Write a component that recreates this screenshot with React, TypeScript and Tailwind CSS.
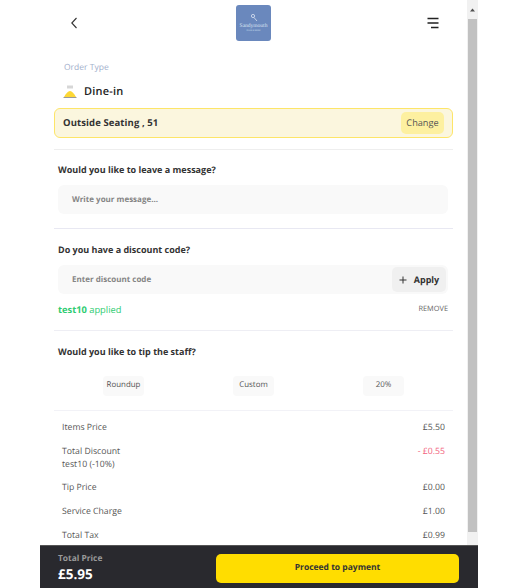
export default function App() {
  const rowText = "text-[8.7px] leading-[14px] text-[#555555]";
  const title = "text-[9px] leading-[14px] font-bold text-[#333333]";
  const chip = "w-[41px] h-[20px] rounded-[4px] bg-[#f9f9f9] flex items-center justify-center text-[7.9px] text-[#555555]";
  return (
    <div className="w-[508px] h-[588px] overflow-hidden bg-white pl-[40px] font-['Open_Sans',sans-serif] [text-rendering:geometricPrecision]">
      <div className="w-[438px] h-[588px] flex flex-col">
        <div className="flex flex-1 min-h-0">
          <div className="w-[427px] overflow-hidden">
            <header className="h-[46px] flex items-center justify-between pl-[28px] pr-[28px]">
              <svg width="12" height="12" viewBox="0 0 12 12" fill="none" stroke="#333" strokeWidth="1.1">
                <path d="M8.5 1 L3.8 6 L8.5 11" />
              </svg>
              <div className="w-[35px] h-[36px] rounded-[3px] bg-[#6a88bd] flex flex-col items-center justify-center">
                <svg width="10" height="10" viewBox="0 0 10 10" fill="none" stroke="#dbe3f2" strokeWidth="0.8">
                  <circle cx="4" cy="3" r="1.6" />
                  <path d="M5 4.5 L8 8" />
                </svg>
                <span className="text-[5.5px] leading-[6px] text-[#dbe3f2] font-['Liberation_Serif',serif] whitespace-nowrap">Sandymouth</span>
                <span className="text-[2px] leading-[4px] text-[#dbe3f2]">FOOD &amp; DRINK</span>
              </div>
              <svg width="12" height="12" viewBox="0 0 12 12" stroke="#222" strokeWidth="1.4">
                <path d="M0.5 1.5 H11.5 M0.5 6 H11.5 M4 10.5 H11.5" />
              </svg>
            </header>

            <div className="pl-[14px] w-[413px]">
              <div className="pl-[10px] pt-[15px] text-[8.5px] leading-[14px] text-[#a3b0cc]">Order Type</div>
              <div className="pl-[9px] pt-[8px] h-[33px] flex items-start gap-[7px]">
                <svg width="14" height="14" viewBox="0 0 14 14" className="mt-[2px]">
                  <path d="M1 12 C3 8.5 5 6 7 6 C9 6 11 8.5 13 12 Z" fill="#fdd835" />
                  <path d="M0.5 12.5 H13.5" stroke="#9a9a9a" strokeWidth="1" />
                  <path d="M5 0.5 V3.5 M7 0.5 V3.5 M9 0.5 V3.5" stroke="#9a9a9a" strokeWidth="0.8" />
                </svg>
                <span className="text-[11px] leading-[18px] font-semibold text-[#222222] tracking-[0.2px]">Dine-in</span>
              </div>
              <div className="h-[30px] w-[399px] flex items-center justify-between rounded-[6px] border border-[#fde568] bg-[#fbf6de] pl-[8px] pr-[8px]">
                <span className="text-[9.5px] font-bold text-[#333333] tracking-[0.1px]">Outside Seating , 51</span>
                <span className="h-[22px] w-[43px] rounded-[5px] bg-[#fdf0a0] flex items-center justify-center text-[9.2px] text-[#555555]">Change</span>
              </div>
              <div className="h-px w-[399px] mt-[11px] bg-[#eeeeee]"></div>

              <div className="w-[399px] pl-[4px] pr-[5px]">
                <div className={"pt-[13px] " + title}>Would you like to leave a message?</div>
                <div className="mt-[8px] h-[29px] rounded-[6px] bg-[#f9f9f9] flex items-center pl-[14px] text-[8px] font-bold text-[#858585]">Write your message...</div>
              </div>
              <div className="h-px w-[399px] mt-[14px] bg-[#e8e8f2]"></div>

              <div className="w-[399px] pl-[4px] pr-[5px]">
                <div className={"pt-[14px] " + title}>Do you have a discount code?</div>
                <div className="mt-[8px] h-[29px] rounded-[6px] bg-[#f9f9f9] flex items-center justify-between pl-[14px] pr-[2px]">
                  <span className="text-[8px] font-bold text-[#858585]">Enter discount code</span>
                  <span className="h-[25px] w-[54px] rounded-[5px] bg-[#f0f0f0] flex items-center justify-center gap-[7px] text-[9px] font-bold text-[#333333]">
                    <svg width="8" height="8" viewBox="0 0 8 8" stroke="#333" strokeWidth="1"><path d="M4 0.5 V7.5 M0.5 4 H7.5" /></svg>
                    Apply
                  </span>
                </div>
                <div className="mt-[8px] h-[16px] flex items-center justify-between">
                  <span className="text-[9.3px] text-[#2ecc71]"><b className="font-bold">test10</b> applied</span>
                  <span className="text-[7.4px] text-[#666666]">REMOVE</span>
                </div>
              </div>
              <div className="h-px w-[399px] mt-[12px] bg-[#eeeef4]"></div>

              <div className="w-[399px] pl-[4px]">
                <div className={"pt-[14px] " + title}>Would you like to tip the staff?</div>
              </div>
              <div className="w-[399px] mt-[17px] pl-[49px] flex gap-[89px]">
                <span className={chip}>Roundup</span>
                <span className={chip}>Custom</span>
                <span className={chip}>20%</span>
              </div>
              <div className="h-px w-[399px] mt-[14px] bg-[#f2f2f7]"></div>

              <div className="w-[399px] pl-[8px] pr-[8px] pt-[9px] flex flex-col gap-[10px]">
                <div className={"flex justify-between " + rowText}><span>Items Price</span><span>£5.50</span></div>
                <div className={"mt-[0.5px] h-[25px] flex justify-between " + rowText}>
                  <span className="leading-[13px]">Total Discount<br />test10 (-10%)</span>
                  <span className="text-[#f2637e] leading-[13px]">- £0.55</span>
                </div>
                <div className={"flex justify-between " + rowText}><span>Tip Price</span><span>£0.00</span></div>
                <div className={"flex justify-between " + rowText}><span>Service Charge</span><span>£1.00</span></div>
                <div className={"flex justify-between " + rowText}><span>Total Tax</span><span>£0.99</span></div>
              </div>
            </div>
          </div>

          <div className="w-[11px] flex flex-col bg-[#f1f1f1]">
            <div className="h-[19px] flex items-center justify-center">
              <svg width="5" height="4" viewBox="0 0 5 4"><path d="M2.5 0.5 L5 3.5 H0 Z" fill="#505050" /></svg>
            </div>
            <div className="w-[9px] ml-px flex-1 bg-[#c1c1c1]"></div>
            <div className="h-[13px]"></div>
          </div>
        </div>

        <footer className="h-[43px] shrink-0 bg-[#29292e] flex items-center justify-between pl-[18px] pr-[19px] pt-[2px] border-t border-[#555555]">
          <div>
            <div className="text-[8.4px] leading-[13px] font-bold text-[#9a9a9a]">Total Price</div>
            <div className="text-[13.5px] leading-[19px] font-bold text-white">£5.95</div>
          </div>
          <div className="w-[243px] h-[29px] rounded-[5px] bg-[#ffdd00] flex items-center justify-center text-[8.5px] font-bold text-[#333333]">Proceed to payment</div>
        </footer>
      </div>
    </div>
  );
}
